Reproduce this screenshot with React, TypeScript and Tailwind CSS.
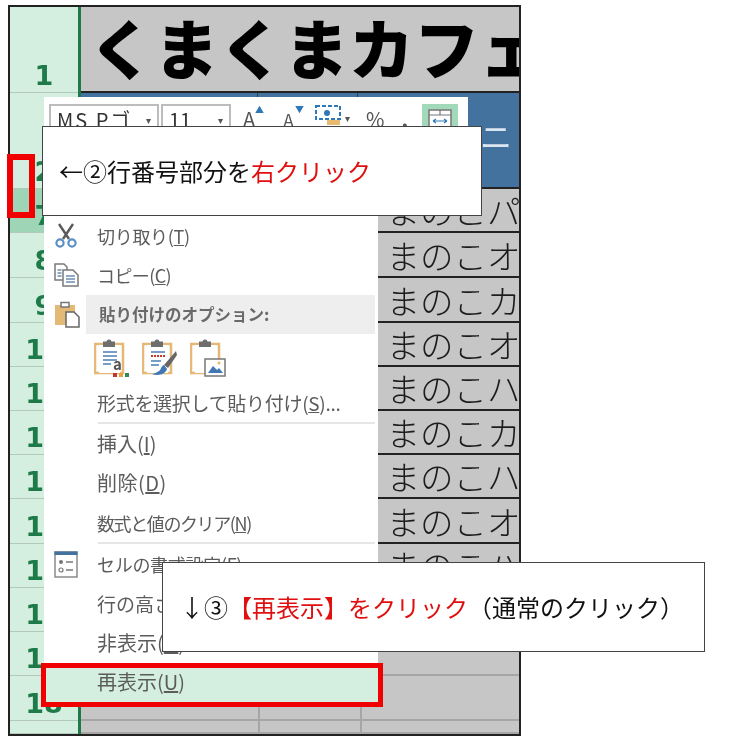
import React from "react";

const jp = "font-['Noto_Sans_CJK_JP','Noto_Sans',sans-serif]";

const rows = [
  { n: "1", h: "h-[86px]", kind: "title" },
  { n: "2", h: "h-[96px]", kind: "blue" },
  { n: "7", h: "h-[44px]", kind: "text", t: "くまのこパン", dark: true },
  { n: "8", h: "h-[45px]", kind: "text", t: "くまのこオレ" },
  { n: "9", h: "h-[45px]", kind: "text", t: "くまのこカフェ" },
  { n: "10", h: "h-[44px]", kind: "text", t: "くまのこオレ" },
  { n: "11", h: "h-[44px]", kind: "text", t: "くまのこハチ" },
  { n: "12", h: "h-[44px]", kind: "text", t: "くまのこカレー" },
  { n: "13", h: "h-[44px]", kind: "text", t: "くまのこハチ" },
  { n: "14", h: "h-[45px]", kind: "text", t: "くまのこオレ" },
  { n: "15", h: "h-[44px]", kind: "text", t: "くまのこハチ" },
  { n: "16", h: "h-[44px]", kind: "empty" },
  { n: "17", h: "h-[44px]", kind: "empty" },
  { n: "18", h: "h-[45px]", kind: "empty" },
  { n: "", h: "flex-1", kind: "empty" },
];

function Row({ r }: { r: (typeof rows)[number] }) {
  if (r.kind === "title") {
    return (
      <div className={`${r.h} bg-[#c6c6c6] border-b-2 border-[#222] overflow-hidden whitespace-nowrap pl-[8px] pb-[6px] flex items-center`}>
        <span className="text-[65px] leading-none font-black text-black">くまくまカフェ</span>
      </div>
    );
  }
  if (r.kind === "blue") {
    return (
      <div className={`${r.h} bg-[#44729f] border-b-2 border-[#222] flex`}>
        <div className="w-[177px] border-r border-[#2b3f55]" />
        <div className="w-[100px] border-r border-[#2b3f55]" />
        <div className="flex-1 overflow-hidden flex justify-end items-start pt-[26px] pr-[7px]">
          <span className="text-[32px] leading-none text-[#dbe5ef]">ニ</span>
        </div>
      </div>
    );
  }
  const line = r.kind === "text" ? "border-[#222]" : "border-[#a6a6a6]";
  return (
    <div className={`${r.h} bg-[#c6c6c6] border-b-2 ${line} flex`}>
      <div className="w-[179px] border-r-2 border-[#a6a6a6]" />
      <div className="w-[102px] border-r-2 border-[#a6a6a6]" />
      <div className="flex-1 min-w-0 overflow-hidden whitespace-nowrap flex items-center">
        {r.t && <span className="-ml-[9px] text-[33.5px] leading-none text-[#1c1c1c] font-light">{r.t}</span>}
      </div>
    </div>
  );
}

function Header({ r }: { r: (typeof rows)[number] }) {
  return (
    <div
      className={`${r.h} ${r.dark ? "bg-[#9fd5b7]" : "bg-[#d4efdf]"} border-b border-[#b4c9bc] flex items-end justify-center pb-[1px]`}
    >
      <span className="text-[27px] leading-[30px] font-bold text-[#1f7a4a] font-['DejaVu_Sans',sans-serif]">{r.n}</span>
    </div>
  );
}

function Item({
  label,
  u,
  tail = "",
  icon,
  active = false,
  size = "text-[18px] tracking-[-0.3px]",
}: {
  label: string;
  u: string;
  tail?: string;
  icon?: React.ReactNode;
  active?: boolean;
  size?: string;
}) {
  return (
    <div className={`h-[39.4px] flex items-center ${active ? "bg-[#d4efdf]" : ""}`}>
      <div className="w-[53px] flex justify-start pl-[10px]">{icon}</div>
      <span className={`${size} leading-none text-[#5c5c5c] whitespace-nowrap`}>
        {label}(<span className="underline">{u}</span>){tail}
      </span>
    </div>
  );
}

const Sep = () => <div className="h-[2px] ml-[54px] mr-[3px] bg-[#e6e6e6]" />;

function ScissorsIcon() {
  return (
    <svg width="24" height="25" viewBox="0 0 24 25" fill="none">
      <path d="M5 1l10 15M19 1L9 16" stroke="#5a5a5a" strokeWidth="2.4" />
      <circle cx="6" cy="20" r="3.6" stroke="#5b8fc4" strokeWidth="2.2" />
      <circle cx="18" cy="20" r="3.6" stroke="#5b8fc4" strokeWidth="2.2" />
    </svg>
  );
}

function CopyIcon() {
  return (
    <svg width="26" height="24" viewBox="0 0 26 24" fill="none">
      <path d="M1 1h9l3 3v13H1z" fill="#fff" stroke="#7a7a7a" strokeWidth="1.5" />
      <path d="M9 7h10l5 5v11H9z" fill="#fff" stroke="#7a7a7a" strokeWidth="1.5" />
      <path d="M3.5 7h4M3.5 10h4M3.5 13h4M12 13h9M12 16h9M12 19h9" stroke="#6b8fb5" strokeWidth="1.3" />
    </svg>
  );
}

function PasteIcon() {
  return (
    <svg width="27" height="28" viewBox="0 0 27 28" fill="none">
      <path d="M1 5h20v20H1z" fill="#e4b976" />
      <path d="M7 2.5h8V7H7z" fill="#fff" stroke="#777" strokeWidth="1.5" />
      <path d="M12 12h8l5 5v10H12z" fill="#fff" stroke="#666" strokeWidth="1.5" />
    </svg>
  );
}

function ClipBase({ children }: { children: React.ReactNode }) {
  return (
    <svg width="36" height="38" viewBox="0 0 36 38" fill="none">
      <path d="M1 5h28v29H1z" fill="none" stroke="#e4b976" strokeWidth="2.5" />
      <path d="M5 6h21v28H5z" fill="#fff" />
      <path d="M9 2.5h12V8H9z" fill="#6e6e6e" />
      <circle cx="15" cy="3" r="2.5" fill="#6e6e6e" />
      {children}
    </svg>
  );
}

function CellIcon() {
  return (
    <svg width="24" height="27" viewBox="0 0 24 27" fill="none">
      <path d="M1 1h22v25H1z" fill="#fff" stroke="#8a8a8a" strokeWidth="1.5" />
      <path d="M0.5 0.5h23V4h-23z" fill="#44729f" />
      <circle cx="7" cy="11" r="2" fill="#777" />
      <circle cx="7" cy="19" r="2" stroke="#777" strokeWidth="1.2" />
      <path d="M12 11h7M12 19h7" stroke="#777" strokeWidth="1.5" />
    </svg>
  );
}

function Toolbar() {
  return (
    <div className="h-[52px] w-[424px] bg-white flex items-start pt-[7px] pl-[5px] gap-[2px] text-[#555]">
      <div className="w-[110px] h-[40px] border-2 border-[#bdbdbd] flex justify-between pl-[6px] pr-[6px]">
        <span className="text-[20px] leading-[28px] tracking-[2px] text-[#333] whitespace-nowrap">MS Pゴ</span>
        <span className="text-[10px] leading-[28px]">▾</span>
      </div>
      <div className="w-[70px] h-[40px] border-2 border-[#bdbdbd] flex justify-between pl-[6px] pr-[6px]">
        <span className="text-[20px] leading-[28px] text-[#333]">11</span>
        <span className="text-[10px] leading-[28px]">▾</span>
      </div>
      <span className="ml-[10px] w-[30px] text-[20px] leading-[30px] relative">
        A<span className="absolute left-[12px] -top-[1px] text-[9px] leading-[14px] text-[#2f78b7]">▲</span>
      </span>
      <span className="ml-[8px] w-[30px] text-[18px] leading-[32px] relative">
        A<span className="absolute left-[12px] -top-[1px] text-[9px] leading-[14px] text-[#2f78b7]">▼</span>
      </span>
      <svg className="mt-[1px]" width="26" height="22" viewBox="0 0 26 22" fill="none">
        <path d="M1 1h24v13H1z" stroke="#2f78b7" strokeWidth="2" strokeDasharray="4 2" />
        <circle cx="12" cy="8" r="3" fill="#2f78b7" />
        <path d="M12 15h13v5H12z" fill="#e9b96e" />
      </svg>
      <span className="ml-[2px] text-[10px] leading-[28px]">▾</span>
      <span className="ml-[14px] text-[20px] leading-[30px]">%</span>
      <span className="ml-[15px] text-[20px] leading-[30px] font-bold">,</span>
      <div className="ml-[12px] w-[36px] h-[34px] bg-[#a2d9bb] flex items-center justify-center">
        <svg width="26" height="26" viewBox="0 0 26 26" fill="none">
          <path d="M2 2h22v22H2z" fill="#fff" stroke="#777" strokeWidth="1.5" />
          <path d="M2 7h22M2 19h22M13 2v5M13 19v5" stroke="#777" strokeWidth="1.2" />
          <path d="M6 13h14M6 13l3-2M6 13l3 2M20 13l-3-2M20 13l-3 2" stroke="#2f78b7" strokeWidth="1.2" />
        </svg>
      </div>
    </div>
  );
}

function Menu() {
  return (
    <div className={`absolute left-[44px] top-[97px] flex flex-col items-start ${jp}`}>
      <Toolbar />
      <div className="w-[334px] bg-white">
        <div className="h-[67px]" />
        <Item label="切り取り" u="T" icon={<ScissorsIcon />} />
        <Item label="コピー" u="C" size="text-[18px] tracking-[-0.6px]" icon={<CopyIcon />} />
        <div className="h-[39px] flex items-stretch">
          <div className="w-[42px] flex items-center justify-center pl-[4px]">
            <PasteIcon />
          </div>
          <div className="w-[289px] bg-[#eeeeee] flex items-center pl-[13px]">
            <span className="text-[16.5px] leading-none font-bold text-[#6a6a6a] whitespace-nowrap">貼り付けのオプション:</span>
          </div>
        </div>
        <div className="h-[49px] flex items-start pt-[5px] pl-[50px] gap-[12px]">
          <ClipBase>
            <path d="M9 13h14M9 17h14M9 21h14M9 25h8" stroke="#4a7fb5" strokeWidth="1.5" />
            <text x="19" y="31" fontSize="15" fontWeight="700" fill="#555">a</text>
            <path d="M19 34h4v4h-4z" fill="#c0392b" />
            <path d="M25 34h4v4h-4z" fill="#e9a23b" />
            <path d="M31 34h4v4h-4z" fill="#2e8b57" />
          </ClipBase>
          <ClipBase>
            <path d="M9 13h14M9 22h10M9 26h8" stroke="#4a7fb5" strokeWidth="1.5" />
            <path d="M9 17h14" stroke="#c0392b" strokeWidth="2" strokeDasharray="2 1" />
            <path d="M34 12L22 26l4 3L35 16z" fill="#666" />
            <path d="M22 26c-3 1-3 5-5 6s-5 3-7 3c5 2 13 1 15-5z" fill="#3f78b5" />
          </ClipBase>
          <ClipBase>
            <path d="M15 20h20v17H15z" fill="#fff" stroke="#777" strokeWidth="1.5" />
            <path d="M18 34l5-7 4 4 2-2 4 5z" fill="#3f78b5" />
            <circle cx="29" cy="24" r="1.5" fill="#e9b96e" />
          </ClipBase>
        </div>
        <Item label="形式を選択して貼り付け" u="S" tail="..." size="text-[19px] tracking-[-0.3px]" />
        <Sep />
        <Item label="挿入" u="I" size="text-[20px]" />
        <Item label="削除" u="D" size="text-[20px] tracking-[0.5px]" />
        <Item label="数式と値のクリア" u="N" size="text-[18px] tracking-[-1.4px]" />
        <Sep />
        <Item label="セルの書式設定" u="F" icon={<CellIcon />} />
        <Item label="行の高さ" u="R" size="text-[19px]" />
        <Item label="非表示" u="H" size="text-[20px]" />
        <Item label="再表示" u="U" active size="text-[20px]" />
      </div>
    </div>
  );
}

export default function App() {
  return (
    <div className={`relative w-[741px] h-[748px] bg-white overflow-hidden ${jp} blur-[0.4px]`}>
      <div className="ml-[8px] mt-[5px] w-[513px] h-[731px] border-2 border-[#222] flex overflow-hidden absolute">
        <div className="w-[68px] border-r-[3px] border-[#1f7a4a] flex flex-col shrink-0 box-content">
          {rows.map((r, i) => (
            <Header key={i} r={r} />
          ))}
        </div>
        <div className="flex-1 min-w-0 flex flex-col">
          {rows.map((r, i) => (
            <Row key={i} r={r} />
          ))}
        </div>
      </div>

      <Menu />

      <div className="absolute left-[41px] top-[663px] w-[342px] h-[44px] border-[5px] border-[#f00000]" />
      <div className="absolute left-[7px] top-[154px] w-[28px] h-[64px] border-[6px] border-[#f00000]" />

      <div className="absolute left-[42px] top-[126px] w-[440px] h-[90px] bg-white border border-[#444] flex items-center pl-[16px] text-[24px] leading-none text-[#111] whitespace-nowrap">
        ←②行番号部分を<span className="text-[#e01010]">右クリック</span>
      </div>
      <div className="absolute left-[162px] top-[562px] w-[543px] h-[90px] bg-white border border-[#444] flex items-center pl-[17px] text-[24px] leading-none text-[#111] whitespace-nowrap">
        ↓③<span className="text-[#e01010]">【再表示】をクリック</span>（通常のクリック）
      </div>
    </div>
  );
}
